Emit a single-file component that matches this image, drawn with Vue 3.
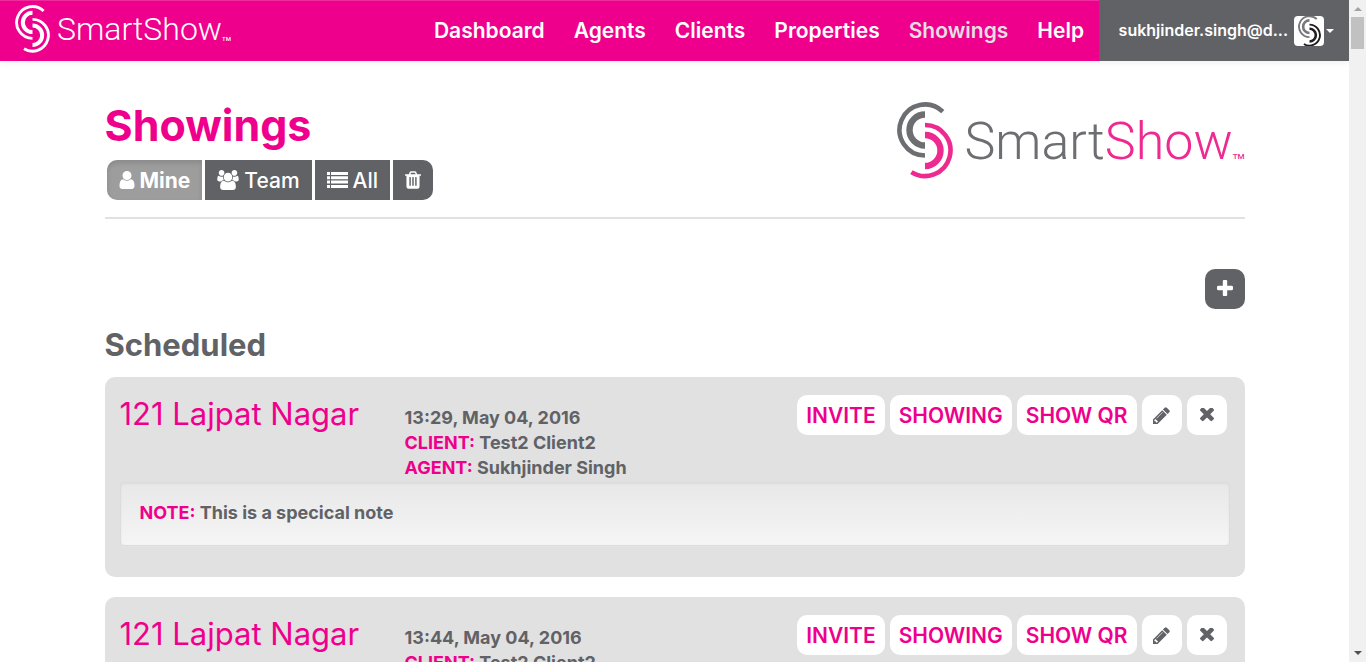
<script setup>
const navItems = ['Dashboard', 'Agents', 'Clients', 'Properties', 'Showings', 'Help']
const activeNav = 'Showings'

const showings = [
  { id: 1, address: '121 Lajpat Nagar', time: '13:29, May 04, 2016', client: 'Test2 Client2', agent: 'Sukhjinder Singh', note: 'This is a specical note' },
  { id: 2, address: '121 Lajpat Nagar', time: '13:44, May 04, 2016', client: 'Test2 Client2', agent: 'Sukhjinder Singh', note: 'This is a specical note' }
]
</script>

<template>
  <div class="window">
    <svg class="defs" aria-hidden="true">
      <symbol id="mark-left" viewBox="0 0 56 77">
        <g fill="none" stroke="currentColor">
          <path d="M28 53.5A25.5 25.5 0 1 1 45.8 9.7" stroke-width="4.6" />
          <path d="M28 43.5A15.5 15.5 0 0 1 28 12.5" stroke-width="6.4" />
        </g>
      </symbol>
      <symbol id="mark-right" viewBox="0 0 56 77">
        <g fill="none" stroke="currentColor">
          <path d="M28 23A25.5 25.5 0 1 1 14.4 70.1" stroke-width="4.6" />
          <path d="M28 33A15.5 15.5 0 0 1 28 64" stroke-width="6.4" />
        </g>
      </symbol>
    </svg>

    <div class="page">
      <header class="topbar">
        <a class="brand" href="#" aria-label="SmartShow">
          <svg class="brand-mark" viewBox="0 0 56 77" aria-hidden="true">
            <use href="#mark-left" /><use href="#mark-right" />
          </svg>
          <span class="brand-word">SmartShow</span><span class="brand-tm">TM</span>
        </a>
        <nav class="nav">
          <a v-for="item in navItems" :key="item" href="#" class="nav-link" :class="{ active: item === activeNav }">{{ item }}</a>
        </nav>
        <button class="user" type="button">
          <span class="user-name">sukhjinder.singh@d...</span>
          <span class="avatar">
            <svg viewBox="0 0 56 77" aria-hidden="true">
              <use class="avatar-grey" href="#mark-left" /><use class="avatar-black" href="#mark-right" />
            </svg>
          </span>
          <span class="caret"></span>
        </button>
      </header>

      <main class="container">
        <div class="page-head">
          <div>
            <h1>Showings</h1>
            <div class="filters" role="group" aria-label="Filter showings">
              <button type="button" class="filter selected">
                <svg class="i-user" viewBox="0 128 1280 1536" aria-hidden="true"><path d="M1280 1399q0 109-62.5 187t-150.5 78h-854q-88 0-150.5-78t-62.5-187q0-85 8.5-160.5t31.5-152 58.5-131 94-89 134.5-34.5q131 128 313 128t313-128q76 0 134.5 34.5t94 89 58.5 131 31.5 152 8.5 160.5zM1024 512q0 159-112.5 271.5t-271.5 112.5-271.5-112.5-112.5-271.5 112.5-271.5 271.5-112.5 271.5 112.5 112.5 271.5z" /></svg>
                Mine
              </button>
              <button type="button" class="filter">
                <svg class="i-users" viewBox="0 0 1920 1792" aria-hidden="true"><path d="M593 896q-162 5-265 128h-134q-82 0-138-40.5t-56-118.5q0-353 124-353 6 0 43.5 21t97.5 42.5 119 21.5q67 0 133-23-5 37-5 66 0 139 81 256zm1071 637q0 120-73 189.5t-194 69.5h-874q-121 0-194-69.5t-73-189.5q0-53 3.5-103.5t14-109 26.5-108.5 43-97.5 62-81 85.5-53.5 111.5-20q10 0 43 21.5t73 48 107 48 135 21.5 135-21.5 107-48 73-48 43-21.5q61 0 111.5 20t85.5 53.5 62 81 43 97.5 26.5 108.5 14 109 3.5 103.5zm-1024-1277q0 106-75 181t-181 75-181-75-75-181 75-181 181-75 181 75 75 181zm704 384q0 159-112.5 271.5t-271.5 112.5-271.5-112.5-112.5-271.5 112.5-271.5 271.5-112.5 271.5 112.5 112.5 271.5zm576 225q0 78-56 118.5t-138 40.5h-134q-103-123-265-128 81-117 81-256 0-29-5-66 66 23 133 23 59 0 119-21.5t97.5-42.5 43.5-21q124 0 124 353zm-128-609q0 106-75 181t-181 75-181-75-75-181 75-181 181-75 181 75 75 181z" /></svg>
                Team
              </button>
              <button type="button" class="filter">
                <svg class="i-list" viewBox="0 0 21 16" aria-hidden="true"><path d="M0 0h3v3H0zM4 0h17v3H4zM0 4.3h3v3H0zM4 4.3h17v3H4zM0 8.6h3v3H0zM4 8.6h17v3H4zM0 13h3v3H0zM4 13h17v3H4z" /></svg>
                All
              </button>
              <button type="button" class="filter" aria-label="Deleted">
                <svg class="i-trash" viewBox="192 128 1408 1536" aria-hidden="true"><path d="M704 1376v-704q0-14-9-23t-23-9h-64q-14 0-23 9t-9 23v704q0 14 9 23t23 9h64q14 0 23-9t9-23zm256 0v-704q0-14-9-23t-23-9h-64q-14 0-23 9t-9 23v704q0 14 9 23t23 9h64q14 0 23-9t9-23zm256 0v-704q0-14-9-23t-23-9h-64q-14 0-23 9t-9 23v704q0 14 9 23t23 9h64q14 0 23-9t9-23zm-544-992h448l-48-117q-7-9-17-11h-317q-10 2-17 11zm928 32v64q0 14-9 23t-23 9h-96v948q0 83-47 143.5t-113 60.5h-832q-66 0-113-58.5t-47-141.5v-952h-96q-14 0-23-9t-9-23v-64q0-14 9-23t23-9h309l70-167q15-37 54-63t79-26h320q40 0 79 26t54 63l70 167h309q14 0 23 9t9 23z" /></svg>
              </button>
            </div>
          </div>
          <div class="company">
            <svg class="company-mark" viewBox="0 0 56 77" aria-hidden="true">
              <use class="mark-grey" href="#mark-left" /><use class="mark-pink" href="#mark-right" />
            </svg>
            <span class="company-word">Smart<span class="pink">Show</span></span><span class="company-tm">TM</span>
          </div>
        </div>

        <div class="toolbar">
          <button type="button" class="add" aria-label="Add showing">
            <svg viewBox="192 128 1408 1408" aria-hidden="true"><path d="M1600 736v192q0 40-28 68t-68 28h-416v416q0 40-28 68t-68 28h-192q-40 0-68-28t-28-68v-416h-416q-40 0-68-28t-28-68v-192q0-40 28-68t68-28h416v-416q0-40 28-68t68-28h192q40 0 68 28t28 68v416h416q40 0 68 28t28 68z" /></svg>
          </button>
        </div>

        <h2>Scheduled</h2>

        <article v-for="s in showings" :key="s.id" class="card">
          <div class="card-row">
            <a class="address" href="#">{{ s.address }}</a>
            <div class="details">
              <div>{{ s.time }}</div>
              <div><span class="label">CLIENT:</span> {{ s.client }}</div>
              <div><span class="label">AGENT:</span> {{ s.agent }}</div>
            </div>
            <div class="actions">
              <button type="button" class="action">INVITE</button>
              <button type="button" class="action">SHOWING</button>
              <button type="button" class="action">SHOW QR</button>
              <button type="button" class="action square" aria-label="Edit">
                <svg class="i-pencil" viewBox="128 128 1536 1536" aria-hidden="true"><path d="M491 1536l91-91-235-235-91 91v107h128v128h107zm523-928q0-22-22-22-10 0-17 7l-542 542q-7 7-7 17 0 22 22 22 10 0 17-7l542-542q7-7 7-17zm-54-192l416 416-832 832h-416v-416zm683 96q0 53-37 90l-166 166-416-416 166-165q36-38 90-38 53 0 91 38l235 234q37 39 37 91z" /></svg>
              </button>
              <button type="button" class="action square" aria-label="Remove">
                <svg class="i-times" viewBox="302 434 1188 1188" aria-hidden="true"><path d="M1490 1322q0 40-28 68l-136 136q-28 28-68 28t-68-28l-294-294-294 294q-28 28-68 28t-68-28l-136-136q-28-28-28-68t28-68l294-294-294-294q-28-28-28-68t28-68l136-136q28-28 68-28t68 28l294 294 294-294q28-28 68-28t68 28l136 136q28 28 28 68t-28 68l-294 294 294 294q28 28 28 68z" /></svg>
              </button>
            </div>
          </div>
          <div class="note"><span class="label">NOTE:</span> {{ s.note }}</div>
        </article>
      </main>
    </div>

    <div class="scrollbar" aria-hidden="true">
      <span class="arrow up"></span>
      <span class="thumb"></span>
      <span class="arrow down"></span>
    </div>
  </div>
</template>

<style>
body { margin: 0; background: #fff; }
</style>

<style scoped>
* { box-sizing: border-box; }
.window {
  display: flex;
  height: 100vh;
  overflow: hidden;
  font-family: Inter, "Open Sans", sans-serif;
  color: #616266;
}
.defs { position: absolute; width: 0; height: 0; }
.page { flex: 1; min-width: 0; overflow: hidden; }
button { font: inherit; border: 0; margin: 0; padding: 0; cursor: pointer; }
a { text-decoration: none; }
svg { display: block; flex: none; fill: currentColor; }

.topbar {
  display: flex;
  height: 61px;
  background: #ef008c;
  box-shadow: inset 0 1px 0 #ef2b9e, 0 1px 8px rgba(0, 0, 0, .08);
}
.brand { display: flex; align-items: center; padding: 0 0 3px 15px; color: #fff; }
.brand-mark { width: 35px; height: 48px; }
.brand-word { margin-left: 7px; font: 300 32px/40px Roboto, sans-serif; }
.brand-tm { align-self: flex-end; margin-bottom: 16px; font: 500 6px/6px Roboto, sans-serif; }
.nav { display: flex; gap: 29px; margin-left: auto; padding-right: 15px; }
.nav-link {
  font-size: 21px;
  font-weight: 600;
  line-height: 61px;
  color: #fff;
}
.nav-link.active { color: #e5dfe3; }
.user {
  display: flex;
  align-items: center;
  justify-content: flex-end;
  width: 250px;
  padding-right: 15px;
  background: #616266;
  color: #fff;
}
.user-name { padding-bottom: 2px; font-size: 16px; font-weight: 600; }
.avatar {
  display: flex;
  justify-content: center;
  align-items: center;
  width: 30px;
  height: 30px;
  margin: 0 2px 0 6px;
  border-radius: 4px;
  background: #fff;
  overflow: hidden;
}
.avatar svg { width: 23px; height: 32px; }
.avatar-grey { color: #77787b; }
.avatar-black { color: #231f20; }
.caret { border: 4px solid transparent; border-top-color: #fff; border-bottom: 0; }

.container { max-width: 1140px; margin: 0 auto; }
.page-head {
  display: flex;
  justify-content: space-between;
  padding: 39px 0 17px;
  border-bottom: 2px solid #e1e1e1;
}
h1 { margin: 0 0 10px; font-size: 43px; font-weight: 700; line-height: 50px; color: #ef008c; }
.filters { display: flex; gap: 3px; padding-left: 2px; }
.filter {
  display: flex;
  align-items: center;
  gap: 5px;
  height: 40px;
  padding: 0 12px;
  background: #616266;
  color: #fff;
  font-size: 21px;
  font-weight: 500;
}
.filter:first-child { border-radius: 10px 0 0 10px; }
.filter:last-child { border-radius: 0 10px 10px 0; }
.filter.selected { background: #9d9d9d; font-weight: 700; box-shadow: inset 0 3px 5px rgba(0, 0, 0, .125); }
.i-user { width: 16px; height: 18px; }
.i-users { width: 22px; height: 20px; }
.i-list { width: 21px; height: 16px; }
.i-trash { width: 16px; height: 18px; }

.company { display: flex; align-items: flex-start; padding-top: 2px; }
.company-mark { width: 56px; height: 77px; }
.mark-grey { color: #6d6e71; }
.mark-pink { color: #ee2a90; }
.company-word { margin-left: 12px; font: 300 52px/80px Roboto, sans-serif; color: #6d6e71; }
.pink { color: #ee2a90; }
.company-tm { margin-top: 50px; font: 500 8px/9px Roboto, sans-serif; color: #ee2a90; }

.toolbar { display: flex; justify-content: flex-end; padding-top: 50px; }
.add {
  display: flex;
  align-items: center;
  justify-content: center;
  width: 40px;
  height: 40px;
  padding-bottom: 2px;
  border-radius: 10px;
  background: #616266;
  color: #fff;
}
.add svg { width: 16px; height: 16px; }
h2 { margin: 18px 0 14px; font-size: 31px; font-weight: 700; line-height: 36px; }

.card { margin-bottom: 20px; padding: 18px 15px 31px; border-radius: 10px; background: #e1e1e1; }
.card-row { display: grid; grid-template-columns: 285px 1fr auto; padding-right: 3px; }
.address { font-size: 31px; font-weight: 400; line-height: 38px; color: #ef008c; }
.details { padding-top: 10px; font-size: 18px; font-weight: 700; line-height: 25px; }
.label { color: #ef008c; }
.actions { display: flex; align-items: flex-start; gap: 5px; }
.action {
  display: flex;
  align-items: center;
  justify-content: center;
  height: 40px;
  padding: 0 9px;
  border-radius: 10px;
  background: #fff;
  color: #ef008c;
  font-size: 21px;
  font-weight: 600;
}
.action.square { width: 40px; color: #616266; }
.i-pencil { width: 17px; height: 17px; }
.i-times { width: 14px; height: 14px; }
.note {
  margin-top: 2px;
  padding: 17px 19px 20px;
  border: 1px solid #dcdcdc;
  border-radius: 4px;
  background: linear-gradient(#e8e8e8, #f5f5f5);
  box-shadow: inset 0 1px 3px rgba(0, 0, 0, .05), 0 1px 0 rgba(255, 255, 255, .1);
  font-size: 18px;
  font-weight: 700;
  line-height: 25px;
}

.scrollbar {
  display: flex;
  flex-direction: column;
  align-items: center;
  width: 17px;
  padding: 7px 0;
  background: #f1f1f1;
}
.thumb { width: 13px; height: 32px; margin-top: 6px; background: #c1c1c1; }
.arrow { border: 4px solid transparent; }
.arrow.up { border-top: 0; border-bottom-color: #a3a3a3; }
.arrow.down { margin-top: auto; border-bottom: 0; border-top-color: #505050; }
</style>
